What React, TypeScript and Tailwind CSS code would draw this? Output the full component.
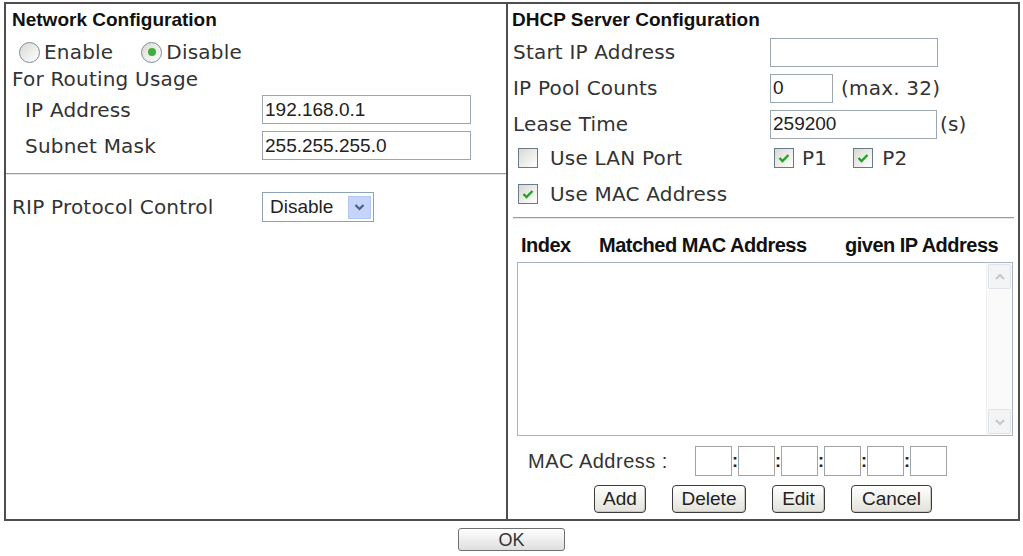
import React from "react"

const label = "font-['DejaVu_Sans',Verdana,sans-serif] text-[20px] tracking-[0.2px] text-[#333]"
const bold = "font-['Liberation_Sans',Arial,sans-serif] font-bold text-[19px] text-[#111]"
const arial = "font-['Liberation_Sans',Arial,sans-serif]"

function TextBox({ value = "", w }: { value?: string; w: string }) {
  return (
    <input
      readOnly
      defaultValue={value}
      className={`${w} h-[29px] border border-[#9ba6b1] bg-white pl-[2px] outline-none ${arial} text-[19px] text-[#222]`}
    />
  )
}

function Check({ checked = false }: { checked?: boolean }) {
  return (
    <span className="w-[20px] h-[20px] shrink-0 border-[1.5px] border-[#6a7a8a] bg-gradient-to-br from-[#d9d9d3] to-white flex items-center justify-center">
      {checked && (
        <svg width="12" height="10" viewBox="0 0 12 10">
          <path d="M1.5 5 L4.5 8 L10.5 2" fill="none" stroke="#22a322" strokeWidth="2.4" />
        </svg>
      )}
    </span>
  )
}

function Radio({ checked = false }: { checked?: boolean }) {
  return (
    <span className="w-[21px] h-[21px] shrink-0 rounded-full border border-[#7c8c9c] bg-gradient-to-br from-[#d9d9d3] to-white flex items-center justify-center">
      {checked && <span className="w-[8px] h-[8px] rounded-full bg-[#3fae3f]" />}
    </span>
  )
}

function Btn({ children, w }: { children: React.ReactNode; w: string }) {
  return (
    <button
      className={`${w} h-[28px] rounded-[4px] border-[1.5px] border-[#3c3c3c] bg-gradient-to-b from-white to-[#e2e2da] shadow-[inset_-1px_-1px_0_#c8c8c0] ${arial} text-[19px] text-[#222] flex items-center justify-center`}
    >
      {children}
    </button>
  )
}

function Rule({ className = "" }: { className?: string }) {
  return <div className={`border-t border-[#9c9c9c] border-b border-b-[#e6e6e6] ${className}`} />
}

function Caret({ up }: { up?: boolean }) {
  return (
    <svg width="12" height="8" viewBox="0 0 12 8">
      <path d={up ? "M2 6 L6 2 L10 6" : "M2 2 L6 6 L10 2"} fill="none" stroke="#c4c8cc" strokeWidth="2" />
    </svg>
  )
}

export default function App() {
  const macParts = [0, 1, 2, 3, 4, 5]

  return (
    <div className="w-[1023px] h-[556px] bg-white overflow-hidden">
      <div className="ml-[4px] mt-[2px] w-[1016px] h-[519px] border-2 border-[#4e4e4e] flex">
        {/* Network Configuration */}
        <div className="w-[500px] flex flex-col">
          <div className={`h-[33px] flex items-center pl-[6px] ${bold}`}>Network Configuration</div>
          <div className={`h-[30px] flex items-center pl-[13px] ${label}`}>
            <Radio />
            <span className="ml-[4px]">Enable</span>
            <span className="ml-[28px]">
              <Radio checked />
            </span>
            <span className="ml-[4px]">Disable</span>
          </div>
          <div className={`h-[24px] flex items-center pl-[6px] ${label}`}>For Routing Usage</div>
          <div className="mt-[4px] h-[29px] flex items-center pl-[19px]">
            <span className={`w-[237px] ${label}`}>IP Address</span>
            <TextBox value="192.168.0.1" w="w-[209px]" />
          </div>
          <div className="mt-[7px] h-[29px] flex items-center pl-[19px]">
            <span className={`w-[237px] ${label}`}>Subnet Mask</span>
            <TextBox value="255.255.255.0" w="w-[209px]" />
          </div>
          <Rule className="mt-[13px]" />
          <div className="mt-[17px] h-[30px] flex items-center pl-[6px]">
            <span className={`w-[250px] ${label}`}>RIP Protocol Control</span>
            <div className="w-[112px] h-[30px] border border-[#8fa3b8] bg-white flex items-center justify-between pl-[7px] pr-[2px]">
              <span className={`${arial} text-[19px] text-[#222]`}>Disable</span>
              <span className="w-[23px] h-[23px] bg-[#c4d4fb] border border-[#b3c6f4] flex items-center justify-center">
                <svg width="11" height="8" viewBox="0 0 11 8">
                  <path d="M1.5 2 L5.5 6 L9.5 2" fill="none" stroke="#4b5f86" strokeWidth="2.2" />
                </svg>
              </span>
            </div>
          </div>
        </div>

        {/* DHCP Server Configuration */}
        <div className="w-[510px] border-l-2 border-[#4e4e4e] flex flex-col">
          <div className={`h-[33px] flex items-center pl-[4px] ${bold}`}>DHCP Server Configuration</div>
          <div className="h-[30px] flex items-center pl-[5px]">
            <span className={`w-[257px] ${label}`}>Start IP Address</span>
            <TextBox w="w-[168px]" />
          </div>
          <div className="mt-[6px] h-[30px] flex items-center pl-[5px]">
            <span className={`w-[257px] ${label}`}>IP Pool Counts</span>
            <TextBox value="0" w="w-[63px]" />
            <span className={`ml-[8px] ${label}`}>(max. 32)</span>
          </div>
          <div className="mt-[6px] h-[30px] flex items-center pl-[5px]">
            <span className={`w-[257px] ${label}`}>Lease Time</span>
            <TextBox value="259200" w="w-[167px]" />
            <span className={`ml-[3px] ${label}`}>(s)</span>
          </div>
          <div className={`mt-[4px] h-[30px] flex items-center pl-[10px] ${label}`}>
            <span className="w-[256px] flex items-center">
              <Check />
              <span className="ml-[12px]">Use LAN Port</span>
            </span>
            <Check checked />
            <span className="ml-[8px]">P1</span>
            <span className="ml-[26px]">
              <Check checked />
            </span>
            <span className="ml-[9px]">P2</span>
          </div>
          <div className={`mt-[6px] h-[30px] flex items-center pl-[10px] ${label}`}>
            <Check checked />
            <span className="ml-[12px]">Use MAC Address</span>
          </div>
          <Rule className="mt-[8px] ml-[5px] mr-[2px]" />
          <div className={`mt-[14px] h-[24px] flex items-center pl-[13px] ${arial} font-bold text-[20px] tracking-[-0.5px] text-[#111]`}>
            <span className="w-[78px]">Index</span>
            <span className="w-[246px]">Matched MAC Address</span>
            <span>given IP Address</span>
          </div>
          <div className="mt-[5px] ml-[9px] w-[496px] h-[174px] border border-[#a9b5c1] bg-white flex justify-end">
            <div className="w-[26px] h-full bg-[#fafafa] border-l border-[#eef0f2] flex flex-col justify-between p-[1px]">
              <div className="h-[25px] border border-[#e0e4e8] bg-[#f3f4f5] rounded-[2px] flex items-center justify-center">
                <Caret up />
              </div>
              <div className="h-[25px] border border-[#e0e4e8] bg-[#f3f4f5] rounded-[2px] flex items-center justify-center">
                <Caret />
              </div>
            </div>
          </div>
          <div className="mt-[10px] h-[30px] flex items-center pl-[20px]">
            <span className={`w-[167px] ${arial} text-[20px] tracking-[0.5px] text-[#333]`}>MAC Address :</span>
            {macParts.map((i) => (
              <div key={i} className="flex items-center">
                <div className="w-[37px] h-[30px] border border-[#a3a3a3] bg-white" />
                {i < 5 && (
                  <span className={`w-[6px] text-center ${arial} font-bold text-[18px] text-[#222]`}>:</span>
                )}
              </div>
            ))}
          </div>
          <div className="mt-[9px] flex justify-center gap-[26px] pl-[2px]">
            <Btn w="w-[52px]">Add</Btn>
            <Btn w="w-[74px]">Delete</Btn>
            <Btn w="w-[53px]">Edit</Btn>
            <Btn w="w-[81px]">Cancel</Btn>
          </div>
        </div>
      </div>

      <div className="mt-[7px] flex justify-center">
        <button
          className={`w-[107px] h-[23px] rounded-[3px] border border-[#707070] bg-gradient-to-b from-white to-[#dedede] ${arial} text-[18px] leading-none text-[#333] flex items-center justify-center`}
        >
          OK
        </button>
      </div>
    </div>
  )
}
